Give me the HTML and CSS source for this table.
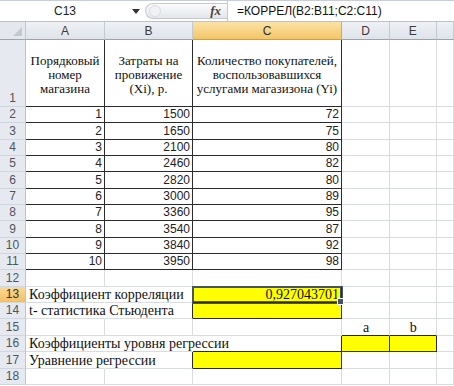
FILE: index.html
```html
<!DOCTYPE html>
<html lang="ru">
<head>
<meta charset="utf-8">
<title>Excel</title>
<link rel="stylesheet" href="styles.css">
</head>
<body>
<div class="app">
  <div class="fbar">
    <div class="namebox">C13</div>
    <div class="dd"><svg width="8" height="5" viewBox="0 0 8 5"><path d="M0 0h8L4 5z" fill="#333"/></svg></div>
    <div class="pill">
      <span class="knob"></span>
      <span class="fx">fx</span>
    </div>
    <div class="formula">=КОРРЕЛ(B2:B11;C2:C11)</div>
  </div>
  <div class="sheet">
    <div class="corner"><span class="tri"></span></div><div class="ch">A</div><div class="ch">B</div><div class="ch on">C</div><div class="ch">D</div><div class="ch">E</div><div class="ch"></div>

    <div class="rh">1</div>
    <div class="c t hd">Порядковый<br>номер<br>магазина</div>
    <div class="c t hd">Затраты на<br>провижение<br>(Xi), р.</div>
    <div class="c t hd">Количество покупателей,<br>воспользовавшихся<br>услугами магазизона (Yi)</div>
    <div class="c"></div><div class="c"></div><div class="c"></div>

    <div class="rh">2</div><div class="c t num">1</div><div class="c t num">1500</div><div class="c t num">72</div><div class="c"></div><div class="c"></div><div class="c"></div>
    <div class="rh">3</div><div class="c t num">2</div><div class="c t num">1650</div><div class="c t num">75</div><div class="c"></div><div class="c"></div><div class="c"></div>
    <div class="rh">4</div><div class="c t num">3</div><div class="c t num">2100</div><div class="c t num">80</div><div class="c"></div><div class="c"></div><div class="c"></div>
    <div class="rh">5</div><div class="c t num">4</div><div class="c t num">2460</div><div class="c t num">82</div><div class="c"></div><div class="c"></div><div class="c"></div>
    <div class="rh">6</div><div class="c t num">5</div><div class="c t num">2820</div><div class="c t num">80</div><div class="c"></div><div class="c"></div><div class="c"></div>
    <div class="rh">7</div><div class="c t num">6</div><div class="c t num">3000</div><div class="c t num">89</div><div class="c"></div><div class="c"></div><div class="c"></div>
    <div class="rh">8</div><div class="c t num">7</div><div class="c t num">3360</div><div class="c t num">95</div><div class="c"></div><div class="c"></div><div class="c"></div>
    <div class="rh">9</div><div class="c t num">8</div><div class="c t num">3540</div><div class="c t num">87</div><div class="c"></div><div class="c"></div><div class="c"></div>
    <div class="rh">10</div><div class="c t num">9</div><div class="c t num">3840</div><div class="c t num">92</div><div class="c"></div><div class="c"></div><div class="c"></div>
    <div class="rh">11</div><div class="c t num">10</div><div class="c t num">3950</div><div class="c t num">98</div><div class="c"></div><div class="c"></div><div class="c"></div>

    <div class="rh">12</div><div class="c"></div><div class="c"></div><div class="c bb"></div><div class="c"></div><div class="c"></div><div class="c"></div>

    <div class="rh on">13</div>
    <div class="c nr"><span>Коэффициент корреляции</span></div>
    <div class="c br"></div>
    <div class="c t y sel right">0,927043701</div>
    <div class="c"></div><div class="c"></div><div class="c"></div>

    <div class="rh">14</div>
    <div class="c nr"><span>t- статистика Стьюдента</span></div>
    <div class="c br"></div>
    <div class="c t y"></div>
    <div class="c"></div><div class="c"></div><div class="c"></div>

    <div class="rh">15</div><div class="c"></div><div class="c"></div><div class="c"></div>
    <div class="c bb mid">a</div><div class="c bb mid">b</div><div class="c"></div>

    <div class="rh">16</div>
    <div class="c nr"><span>Коэффициенты уровня регрессии</span></div>
    <div class="c nr"></div>
    <div class="c br bb"></div>
    <div class="c t y"></div><div class="c t y"></div><div class="c"></div>

    <div class="rh">17</div>
    <div class="c nr"><span>Уравнение регрессии</span></div>
    <div class="c br"></div>
    <div class="c t y"></div>
    <div class="c"></div><div class="c"></div><div class="c"></div>

    <div class="rh">18</div><div class="c"></div><div class="c"></div><div class="c"></div><div class="c"></div><div class="c"></div><div class="c"></div>
  </div>
</div>
</body>
</html>
```

FILE: styles.css
```css
* { box-sizing: border-box; }
html, body { margin: 0; padding: 0; background: #fff; }
body { width: 454px; height: 386px; overflow: hidden; font-family: "Liberation Sans", Arial, sans-serif; }

.fbar {
  height: 22px;
  display: flex;
  align-items: stretch;
  border-top: 1px solid #c9ced6;
  border-bottom: 1px solid #b9c2ce;
  background: #fff;
}
.namebox {
  width: 128px;
  display: flex;
  align-items: center;
  justify-content: center;
  font-size: 12px;
  color: #222;
  padding-left: 2px;
}
.dd {
  width: 16px;
  display: flex;
  align-items: center;
  justify-content: center;
}
.pill {
  width: 82px;
  margin: 2px 0 2px 1px;
  border: 1px solid #c5c9cf;
  border-right: none;
  border-radius: 9px 0 0 9px;
  background: linear-gradient(#fbfbfc, #e3e6ea);
  display: flex;
  align-items: center;
  justify-content: space-between;
  padding: 0 6px 0 3px;
}
.knob {
  width: 12px;
  height: 12px;
  border-radius: 50%;
  border: 1px solid #d8dbe0;
  background: #f1f2f4;
}
.fx {
  font-family: "Liberation Serif", "Times New Roman", serif;
  font-style: italic;
  font-weight: bold;
  font-size: 13px;
  color: #444;
}
.formula {
  flex: 1;
  border-left: 1px solid #c5c9cf;
  display: flex;
  align-items: center;
  padding-left: 9px;
  font-size: 12px;
  color: #111;
}

.sheet {
  display: grid;
  grid-template-columns: 26px 79px 88px 149px 48px 46.5px 1fr;
  grid-template-rows: 18px 67px repeat(17, 16.35px);
}

.corner {
  background: #e4e8ee;
  border-right: 1px solid #bfc7d2;
  border-bottom: 1px solid #9aa3ae;
  position: relative;
}
.tri {
  position: absolute;
  right: 3px;
  bottom: 3px;
  width: 0;
  height: 0;
  border-left: 9px solid transparent;
  border-bottom: 9px solid #c3c8cf;
}
.ch {
  background: linear-gradient(#eef1f5, #dfe4ea);
  border-right: 1px solid #c3cad4;
  border-bottom: 1px solid #9aa3ae;
  display: flex;
  align-items: center;
  justify-content: center;
  font-size: 12px;
  color: #3b3b3b;
}
.ch.on {
  background: linear-gradient(#fbe3a6, #f4c566);
  border-right-color: #d9a84c;
  color: #2d2d2d;
}
.rh {
  background: #e6eaf0;
  border-right: 1px solid #bcc4cf;
  border-bottom: 1px solid #d0d6de;
  display: flex;
  align-items: flex-end;
  justify-content: center;
  font-size: 12px;
  color: #4e5560;
  line-height: 14px;
  padding-bottom: 1px;
}
.rh.on {
  background: linear-gradient(#fbd996, #f3c063);
  color: #3a2f1a;
}

.c {
  border-right: 1px solid #dadcdf;
  border-bottom: 1px solid #dadcdf;
  display: flex;
  align-items: flex-end;
  padding: 0 2px 0 3px;
  min-width: 0;
  white-space: nowrap;
  font-family: "Liberation Serif", "Times New Roman", serif;
  font-size: 14px;
  line-height: 15px;
  color: #111;
}
.c.t { border-right-color: #2b2b2b; border-bottom-color: #2b2b2b; }
.c.bb { border-bottom-color: #2b2b2b; }
.c.br { border-right-color: #2b2b2b; }
.c.nr { border-right-color: transparent; }
.c.y { background: #ffff00; }
.c.num {
  justify-content: flex-end;
  font-family: "Liberation Sans", Arial, sans-serif;
  font-size: 12px;
  line-height: 14px;
  padding-bottom: 1px;
  color: #222;
}
.c.right { justify-content: flex-end; }
.c.mid { justify-content: center; }
.c.hd {
  white-space: normal;
  text-align: center;
  align-items: center;
  justify-content: center;
  font-size: 13px;
  line-height: 14px;
  padding: 3px 1px 0;
}
.c.sel {
  position: relative;
  z-index: 1;
  box-shadow: inset 0 0 0 1px #46536a, 0 0 0 1px #46536a;
}
.c.sel::after {
  content: "";
  position: absolute;
  right: -3px;
  bottom: -3px;
  width: 5px;
  height: 5px;
  background: #46536a;
  border: 1px solid #fff;
}
```
